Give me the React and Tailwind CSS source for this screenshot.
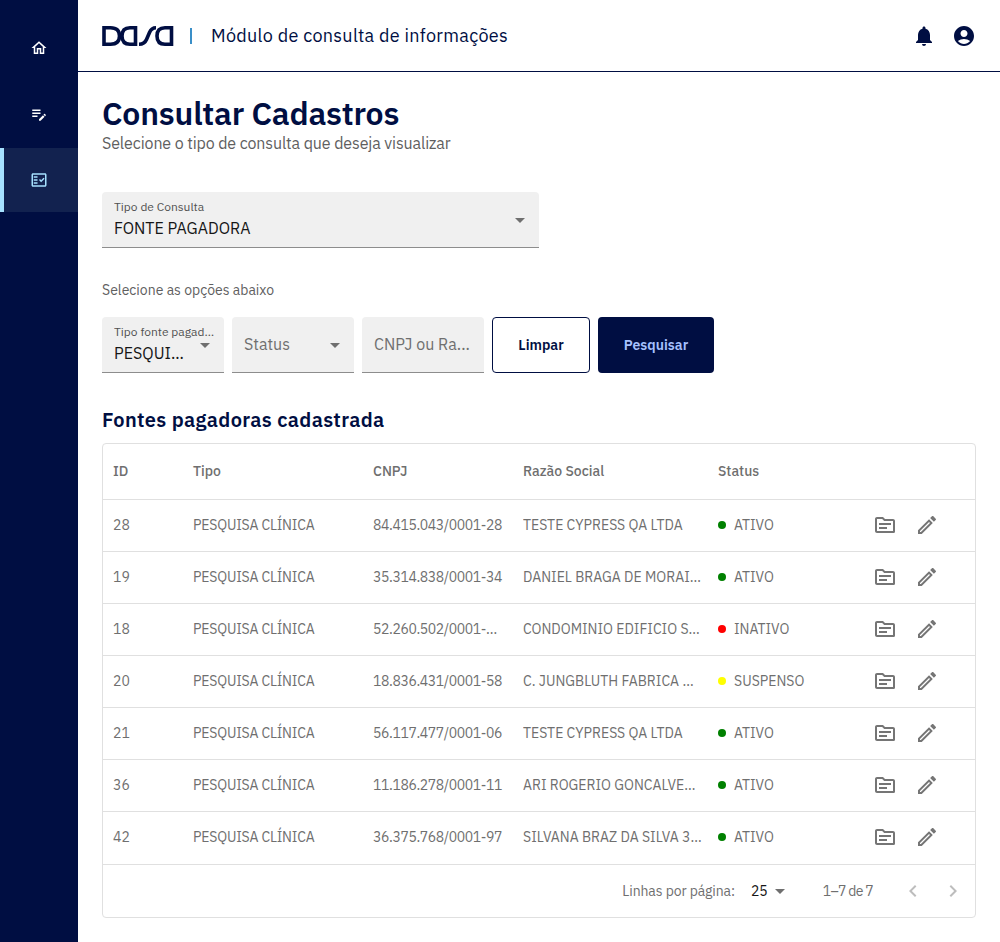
import { MdOutlineHome, MdEditNote, MdOutlineFactCheck, MdNotifications, MdAccountCircle, MdOutlineTopic, MdOutlineEdit, MdArrowDropDown, MdChevronLeft, MdChevronRight } from 'react-icons/md';

const FONT = "font-['IBM_Plex_Sans','Roboto','Noto_Sans',sans-serif]";

const ROWS = [
    { id: '28', cnpj: '84.415.043/0001-28', name: 'TESTE CYPRESS QA LTDA', status: 'ATIVO' },
    { id: '19', cnpj: '35.314.838/0001-34', name: 'DANIEL BRAGA DE MORAIS LTDA', status: 'ATIVO' },
    { id: '18', cnpj: '52.260.502/0001-00000', name: 'CONDOMINIO EDIFICIO SAO PAULO', status: 'INATIVO' },
    { id: '20', cnpj: '18.836.431/0001-58', name: 'C. JUNGBLUTH FABRICA DE MOVEIS', status: 'SUSPENSO' },
    { id: '21', cnpj: '56.117.477/0001-06', name: 'TESTE CYPRESS QA LTDA', status: 'ATIVO' },
    { id: '36', cnpj: '11.186.278/0001-11', name: 'ARI ROGERIO GONCALVES LTDA', status: 'ATIVO' },
    { id: '42', cnpj: '36.375.768/0001-97', name: 'SILVANA BRAZ DA SILVA 3000000', status: 'ATIVO' },
];
const DOT = { ATIVO: 'bg-[#008000]', INATIVO: 'bg-[#ff0000]', SUSPENSO: 'bg-[#ffff00]' };

function Logo() {
    return (
        <svg width="72" height="20" viewBox="0 0 72 20" fill="none" stroke="#000e42" strokeWidth="3.6">
            <path d="M2 20V1.8H8.5Q17.5 1.8 17.5 10T8.5 18.2H2" />
            <path d="M33.5 20V1.8H28Q20 1.8 20 10T28 18.2H33.5" />
            <path d="M54 1.8Q49.5 1.8 47.5 6.5L44.5 13.5Q42.5 18.2 37 18.2" />
            <path d="M69.5 20V1.8H63Q55 1.8 55 10T63 18.2H69.5" />
        </svg>
    );
}

function Field({ label, value, placeholder, arrow, className }) {
    return (
        <div className={`relative h-14 bg-[#f0f0f0] rounded-t border-b border-[#8d8d8d] pl-3 ${className}`}>
            {label && <div className="pt-2 text-xs leading-[14px] text-[#525252] truncate pr-2">{label}</div>}
            {value && <div className="mt-[4px] text-base leading-5 text-[#161616] truncate">{value}</div>}
            {placeholder && <div className="leading-[54px] text-base text-[#6f6f6f] truncate">{placeholder}</div>}
            {arrow && <MdArrowDropDown className={`absolute text-[#6f6f6f] text-2xl ${arrow}`} />}
        </div>
    );
}

export default function App() {
    return (
        <div className={`flex min-h-[942px] bg-white ${FONT}`}>
            <aside className="w-[78px] shrink-0 bg-[#000e42] flex flex-col">
                <div className="h-[96px] flex items-center justify-center"><MdOutlineHome className="text-white text-[18px]" /></div>
                <div className="h-[52px] flex items-start justify-center pt-[9px]"><MdEditNote className="text-white text-[18px]" /></div>
                <div className="h-16 flex items-center justify-center bg-[#12224f] border-l-4 border-[#a6e1ff] pr-1"><MdOutlineFactCheck className="text-[#a6e1ff] text-[18px]" /></div>
            </aside>
            <div className="flex-1 min-w-0">
                <header className="h-[72px] border-b border-[#000e42] flex items-center pl-6 pr-6">
                    <Logo />
                    <div className="w-[2px] h-4 bg-[#3a8fc8] ml-4 mr-[19px]" />
                    <div className="text-lg leading-6 tracking-[0.3px] text-[#000e42]">Módulo de consulta de informações</div>
                    <div className="ml-auto flex items-center gap-4">
                        <MdNotifications className="text-[#000e42] text-2xl" />
                        <MdAccountCircle className="text-[#000e42] text-2xl" />
                    </div>
                </header>
                <main className="px-6 pt-6">
                    <h1 className="text-[32px] leading-[36px] font-semibold tracking-[-0.2px] text-[#000e42] -mt-[1px]">Consultar Cadastros</h1>
                    <p className="text-base leading-6 tracking-[-0.12px] text-[#5f5f5f]">Selecione o tipo de consulta que deseja visualizar</p>
                    <Field className="w-[437px] mt-[37px]" label="Tipo de Consulta" value="FONTE PAGADORA" arrow="right-[7px] top-[16px]" />
                    <p className="mt-[32px] text-sm leading-5 text-[#5f5f5f]">Selecione as opções abaixo</p>
                    <div className="flex gap-2 mt-[17px]">
                        <Field className="w-[122px]" label="Tipo fonte pagadora" value="PESQUI..." arrow="right-[7px] top-[16px]" />
                        <Field className="w-[122px]" placeholder="Status" arrow="right-[7px] top-[16px]" />
                        <Field className="w-[122px]" placeholder="CNPJ ou Ra..." />
                        <button className="w-[98px] h-14 rounded border border-[#000e42] bg-white text-sm font-semibold text-[#000e42]">Limpar</button>
                        <button className="w-[116px] h-14 rounded bg-[#000e42] text-sm font-semibold text-[#a6c1ff]">Pesquisar</button>
                    </div>
                    <h2 className="mt-[35px] text-xl leading-6 font-semibold tracking-[0.35px] text-[#000e42]">Fontes pagadoras cadastrada</h2>
                    <div className="mt-[11px] border border-[#e0e0e0] rounded text-sm text-[#6f6f6f]">
                        <div className="flex h-14 items-center border-b border-[#e0e0e0] font-medium pb-[2px]">
                            <div className="w-[90px] pl-[10px]">ID</div>
                            <div className="w-[180px]">Tipo</div>
                            <div className="w-[150px]">CNPJ</div>
                            <div className="w-[195px]">Razão Social</div>
                            <div>Status</div>
                        </div>
                        {ROWS.map((row, i) => (
                            <div key={row.id} className={`flex items-center border-b border-[#e0e0e0] pb-[2px] ${i === ROWS.length - 1 ? 'h-[53px]' : 'h-[52px]'}`}>
                                <div className="w-[90px] pl-[10px]">{row.id}</div>
                                <div className="w-[180px] tracking-[-0.2px]">PESQUISA CLÍNICA</div>
                                <div className="w-[150px] pr-[18px] truncate tracking-[-0.4px]">{row.cnpj}</div>
                                <div className="w-[195px] pr-4 truncate">{row.name}</div>
                                <div className="w-[155px] flex items-center gap-2">
                                    <span className={`w-2 h-2 rounded-full ${DOT[row.status]}`} />
                                    {row.status}
                                </div>
                                <div className="flex items-center gap-[18px] text-[#757575] text-2xl">
                                    <MdOutlineTopic />
                                    <MdOutlineEdit />
                                </div>
                            </div>
                        ))}
                        <div className="flex h-[52px] items-center justify-end pr-[10px]">
                            <span className="tracking-[-0.1px]">Linhas por página:</span>
                            <span className="ml-4 text-[#161616]">25</span>
                            <MdArrowDropDown className="text-2xl" />
                            <span className="ml-[31px] tracking-[-0.7px]">1–7 de 7</span>
                            <MdChevronLeft className="text-2xl ml-7 text-[#bdbdbd]" />
                            <MdChevronRight className="text-2xl ml-4 text-[#bdbdbd]" />
                        </div>
                    </div>
                </main>
            </div>
        </div>
    );
}
